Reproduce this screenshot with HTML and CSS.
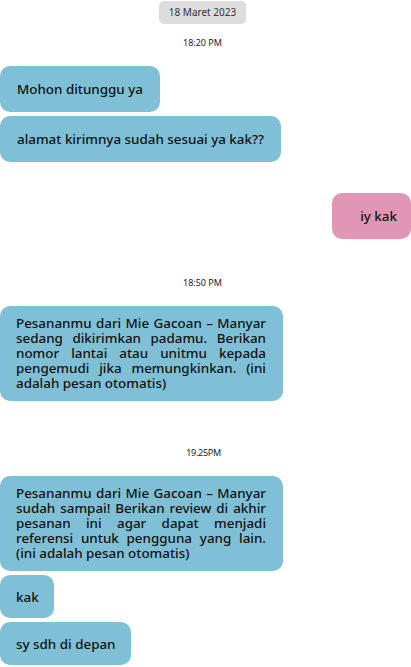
FILE: index.html
```html
<!DOCTYPE html>
<html lang="id">
<head>
    <meta charset="UTF-8">
    <meta name="viewport" content="width=device-width, initial-scale=1.0">
    <title>Chat</title>
    <link rel="stylesheet" href="styles.css">
</head>
<body>
    <div class="chat">
        <div class="date-chip">18 Maret 2023</div>

        <div class="time">18:20 PM</div>
        <div class="bubble in">Mohon ditunggu ya</div>
        <div class="bubble in gap-sm">alamat kirimnya sudah sesuai ya kak??</div>

        <div class="bubble out">iy kak</div>

        <div class="time time-mid">18:50 PM</div>
        <div class="bubble in long">Pesananmu dari Mie Gacoan – Manyar sedang dikirimkan padamu. Berikan nomor lantai atau unitmu kepada pengemudi jika memungkinkan. (ini adalah pesan otomatis)</div>

        <div class="time time-late">19.25PM</div>
        <div class="bubble in long">Pesananmu dari Mie Gacoan – Manyar sudah sampai! Berikan review di akhir pesanan ini agar dapat menjadi referensi untuk pengguna yang lain. (ini adalah pesan otomatis)</div>
        <div class="bubble in short gap-sm">kak</div>
        <div class="bubble in short gap-sm">sy sdh di depan</div>
    </div>
</body>
</html>
```

FILE: styles.css
```css
:root {
    --bubble-in: #7fc0d6;
    --bubble-out: #e196b5;
    --chip: #dddddd;
    --text: #111111;
}

* {
    margin: 0;
    padding: 0;
    box-sizing: border-box;
    font-family: 'Noto Sans', 'Open Sans', sans-serif;
}

body {
    background: white;
    color: var(--text);
}

.chat {
    display: flex;
    flex-direction: column;
    align-items: flex-start;
    width: 411px;
    padding-top: 1px;
}

.date-chip {
    align-self: center;
    margin-right: 6px;
    background: var(--chip);
    border-radius: 5px;
    font-size: 10px;
    line-height: 23px;
    padding: 0 10px;
    color: #333;
}

.time {
    align-self: center;
    margin-right: 6px;
    font-size: 9px;
    line-height: 12px;
    color: #222;
    margin-top: 13px;
    margin-bottom: 17px;
}

.time-mid {
    margin-top: 38px;
}

.time-late {
    margin-top: 46px;
    margin-left: 2px;
    letter-spacing: -0.3px;
}

.bubble {
    background: var(--bubble-in);
    border-radius: 10px;
    font-size: 13.4px;
    font-weight: 500;
    line-height: 16px;
    padding: 15px 17px 15px 17px;
    white-space: nowrap;
}

.bubble.gap-sm {
    margin-top: 4px;
}

.bubble.out {
    align-self: flex-end;
    background: var(--bubble-out);
    margin-top: 31px;
    padding: 15px 14px 15px 28px;
}

.bubble.long {
    width: 283px;
    white-space: normal;
    padding: 10px 17px 10px 16px;
    line-height: 15px;
    text-align: justify;
}

.bubble.short {
    padding: 14px 15px 13px 16px;
}
```
